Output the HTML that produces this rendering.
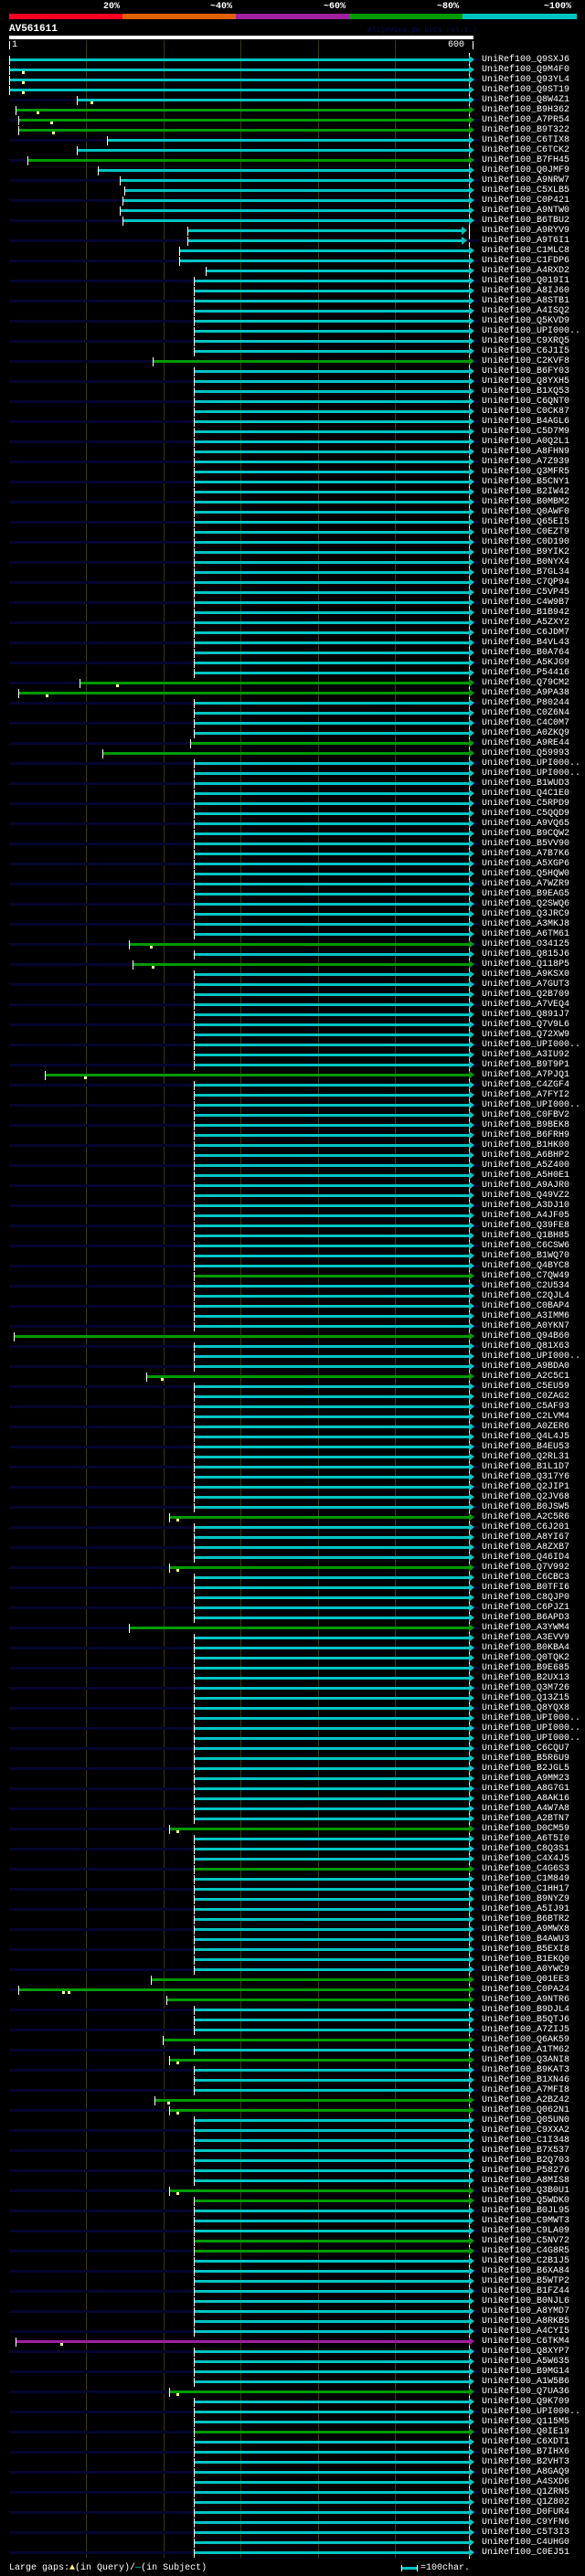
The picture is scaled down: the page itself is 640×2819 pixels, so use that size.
<!DOCTYPE html>
<html><head><meta charset="utf-8"><style>
*{margin:0;padding:0}
body{width:640px;height:2819px;background:#000;position:relative;overflow:hidden;font-family:"Liberation Mono",monospace;color:#fff}
.a{position:absolute}
.seg{position:absolute;top:15px;height:6px}
.pl{position:absolute;top:2px;font:bold 10px/11px "Liberation Mono",monospace;color:#fff}
.gl{position:absolute;top:44px;height:2755px;width:1px;background:#3a3a00}
#rows{position:absolute;top:60px;left:0;width:640px}
#rows div{position:relative;height:11px}
#rows div:nth-child(odd)::before{content:'';position:absolute;left:10px;width:514px;top:4px;height:3px;background:#05052e}
#rows i{position:absolute;left:212px;right:127px;top:4px;height:3px;background:#00c4c4}
#rows i::before{content:'';position:absolute;left:0;top:-3px;width:1px;height:10px;background:#fff}
#rows i::after{content:'';position:absolute;right:-6px;top:-3px;border-left:6px solid #00c4c4;border-top:4px solid transparent;border-bottom:5px solid transparent}
#rows i.g{background:#009a00}
#rows i.g::after{border-left-color:#009a00}
#rows i.m{background:#a020a0}
#rows i.m::after{border-left-color:#a020a0}
#rows s{position:absolute;left:527px;top:0;font:10px/11px "Liberation Mono",monospace;color:#fff;text-decoration:none;white-space:nowrap}
#rows b{position:absolute;top:7px;width:3px;height:3px;background:#ffff80}
</style></head><body>
<div class="seg" style="left:10px;width:124px;background:#ff0022"></div>
<div class="seg" style="left:134px;width:124px;background:#e06000"></div>
<div class="seg" style="left:258px;width:124px;background:#a020a0"></div>
<div class="seg" style="left:382px;width:124px;background:#009a00"></div>
<div class="seg" style="left:506px;width:125px;background:#00c4c4"></div>
<div class="pl" style="left:113px">20%</div>
<div class="pl" style="left:230px">~40%</div>
<div class="pl" style="left:354px">~60%</div>
<div class="pl" style="left:478px">~80%</div>
<div class="pl" style="left:595px">~100%</div>
<div class="a" style="left:10px;top:26px;font:bold 11px/12px 'Liberation Mono',monospace">AV561611</div>
<div class="a" style="left:402px;top:29px;font:8px/10px 'Liberation Mono',monospace;color:#0a0a50">AlignView.pm Beta rel.1.7</div>
<div class="a" style="left:10px;top:39px;width:508px;height:4px;background:#fff"></div>
<div class="a" style="left:10px;top:45px;width:1px;height:9px;background:#fff"></div>
<div class="a" style="left:13px;top:44px;font:10px/11px 'Liberation Mono',monospace">1</div>
<div class="a" style="left:490px;top:44px;font:10px/11px 'Liberation Mono',monospace">600</div>
<div class="a" style="left:517px;top:45px;width:1px;height:9px;background:#fff"></div>
<div class="gl" style="left:94px"></div><div class="gl" style="left:179px"></div><div class="gl" style="left:263px"></div><div class="gl" style="left:348px"></div><div class="gl" style="left:432px"></div>
<div class="a" style="left:513px;top:58px;width:1px;height:2742px;background:#fff"></div>
<div id="rows">
<div><i style="left:10px"></i><s>UniRef100_Q9SXJ6</s></div>
<div><i style="left:10px"></i><b style="left:24px"></b><s>UniRef100_Q9M4F0</s></div>
<div><i style="left:10px"></i><b style="left:24px"></b><s>UniRef100_Q93YL4</s></div>
<div><i style="left:10px"></i><b style="left:24px"></b><s>UniRef100_Q9ST19</s></div>
<div><i style="left:84px"></i><b style="left:99px"></b><s>UniRef100_Q8W4Z1</s></div>
<div><i class="g" style="left:17px"></i><b style="left:40px"></b><s>UniRef100_B9H362</s></div>
<div><i class="g" style="left:20px"></i><b style="left:55px"></b><s>UniRef100_A7PR54</s></div>
<div><i class="g" style="left:20px"></i><b style="left:57px"></b><s>UniRef100_B9T322</s></div>
<div><i style="left:117px"></i><s>UniRef100_C6TIX8</s></div>
<div><i style="left:84px"></i><s>UniRef100_C6TCK2</s></div>
<div><i class="g" style="left:30px"></i><s>UniRef100_B7FH45</s></div>
<div><i style="left:107px"></i><s>UniRef100_Q0JMF9</s></div>
<div><i style="left:131px"></i><s>UniRef100_A9NRW7</s></div>
<div><i style="left:136px"></i><s>UniRef100_C5XLB5</s></div>
<div><i style="left:134px"></i><s>UniRef100_C0P421</s></div>
<div><i style="left:131px"></i><s>UniRef100_A9NTW0</s></div>
<div><i style="left:134px"></i><s>UniRef100_B6TBU2</s></div>
<div><i style="left:205px;right:135px"></i><s>UniRef100_A9RYV9</s></div>
<div><i style="left:205px;right:135px"></i><s>UniRef100_A9T6I1</s></div>
<div><i style="left:196px"></i><s>UniRef100_C1MLC8</s></div>
<div><i style="left:196px"></i><s>UniRef100_C1FDP6</s></div>
<div><i style="left:225px"></i><s>UniRef100_A4RXD2</s></div>
<div><i></i><s>UniRef100_Q019I1</s></div>
<div><i></i><s>UniRef100_A8IJ60</s></div>
<div><i></i><s>UniRef100_A8STB1</s></div>
<div><i></i><s>UniRef100_A4ISQ2</s></div>
<div><i></i><s>UniRef100_Q5KVD9</s></div>
<div><i></i><s>UniRef100_UPI000..</s></div>
<div><i></i><s>UniRef100_C9XRQ5</s></div>
<div><i></i><s>UniRef100_C6J1I5</s></div>
<div><i class="g" style="left:167px"></i><s>UniRef100_C2KVF8</s></div>
<div><i></i><s>UniRef100_B6FY03</s></div>
<div><i></i><s>UniRef100_Q8YXH5</s></div>
<div><i></i><s>UniRef100_B1XQ53</s></div>
<div><i></i><s>UniRef100_C6QNT0</s></div>
<div><i></i><s>UniRef100_C0CK87</s></div>
<div><i></i><s>UniRef100_B4AGL6</s></div>
<div><i></i><s>UniRef100_C5D7M9</s></div>
<div><i></i><s>UniRef100_A0Q2L1</s></div>
<div><i></i><s>UniRef100_A8FHN9</s></div>
<div><i></i><s>UniRef100_A7Z939</s></div>
<div><i></i><s>UniRef100_Q3MFR5</s></div>
<div><i></i><s>UniRef100_B5CNY1</s></div>
<div><i></i><s>UniRef100_B2IW42</s></div>
<div><i></i><s>UniRef100_B0MBM2</s></div>
<div><i></i><s>UniRef100_Q0AWF0</s></div>
<div><i></i><s>UniRef100_Q65EI5</s></div>
<div><i></i><s>UniRef100_C0EZT9</s></div>
<div><i></i><s>UniRef100_C0D190</s></div>
<div><i></i><s>UniRef100_B9YIK2</s></div>
<div><i></i><s>UniRef100_B0NYX4</s></div>
<div><i></i><s>UniRef100_B7GL34</s></div>
<div><i></i><s>UniRef100_C7QP94</s></div>
<div><i></i><s>UniRef100_C5VP45</s></div>
<div><i></i><s>UniRef100_C4W9B7</s></div>
<div><i></i><s>UniRef100_B1B942</s></div>
<div><i></i><s>UniRef100_A5ZXY2</s></div>
<div><i></i><s>UniRef100_C6JDM7</s></div>
<div><i></i><s>UniRef100_B4VL43</s></div>
<div><i></i><s>UniRef100_B0A764</s></div>
<div><i></i><s>UniRef100_A5KJG9</s></div>
<div><i></i><s>UniRef100_P54416</s></div>
<div><i class="g" style="left:87px"></i><b style="left:127px"></b><s>UniRef100_Q79CM2</s></div>
<div><i class="g" style="left:20px"></i><b style="left:50px"></b><s>UniRef100_A9PA38</s></div>
<div><i></i><s>UniRef100_P80244</s></div>
<div><i></i><s>UniRef100_C0Z6N4</s></div>
<div><i></i><s>UniRef100_C4C0M7</s></div>
<div><i></i><s>UniRef100_A0ZKQ9</s></div>
<div><i class="g" style="left:208px"></i><s>UniRef100_A9RE44</s></div>
<div><i class="g" style="left:112px"></i><s>UniRef100_Q59993</s></div>
<div><i></i><s>UniRef100_UPI000..</s></div>
<div><i></i><s>UniRef100_UPI000..</s></div>
<div><i></i><s>UniRef100_B1WUD3</s></div>
<div><i></i><s>UniRef100_Q4C1E0</s></div>
<div><i></i><s>UniRef100_C5RPD9</s></div>
<div><i></i><s>UniRef100_C5QQD9</s></div>
<div><i></i><s>UniRef100_A9VQ65</s></div>
<div><i></i><s>UniRef100_B9CQW2</s></div>
<div><i></i><s>UniRef100_B5VV90</s></div>
<div><i></i><s>UniRef100_A7B7K6</s></div>
<div><i></i><s>UniRef100_A5XGP6</s></div>
<div><i></i><s>UniRef100_Q5HQW0</s></div>
<div><i></i><s>UniRef100_A7WZR9</s></div>
<div><i></i><s>UniRef100_B9EAG5</s></div>
<div><i></i><s>UniRef100_Q2SWQ6</s></div>
<div><i></i><s>UniRef100_Q3JRC9</s></div>
<div><i></i><s>UniRef100_A3MKJ8</s></div>
<div><i></i><s>UniRef100_A6TM61</s></div>
<div><i class="g" style="left:141px"></i><b style="left:164px"></b><s>UniRef100_O34125</s></div>
<div><i></i><s>UniRef100_Q815J6</s></div>
<div><i class="g" style="left:145px"></i><b style="left:166px"></b><s>UniRef100_Q118P5</s></div>
<div><i></i><s>UniRef100_A9KSX0</s></div>
<div><i></i><s>UniRef100_A7GUT3</s></div>
<div><i></i><s>UniRef100_Q2B709</s></div>
<div><i></i><s>UniRef100_A7VEQ4</s></div>
<div><i></i><s>UniRef100_Q891J7</s></div>
<div><i></i><s>UniRef100_Q7V9L6</s></div>
<div><i></i><s>UniRef100_Q72XW9</s></div>
<div><i></i><s>UniRef100_UPI000..</s></div>
<div><i></i><s>UniRef100_A3IU92</s></div>
<div><i></i><s>UniRef100_B9T9P1</s></div>
<div><i class="g" style="left:49px"></i><b style="left:92px"></b><s>UniRef100_A7PJQ1</s></div>
<div><i></i><s>UniRef100_C4ZGF4</s></div>
<div><i></i><s>UniRef100_A7FYI2</s></div>
<div><i></i><s>UniRef100_UPI000..</s></div>
<div><i></i><s>UniRef100_C0FBV2</s></div>
<div><i></i><s>UniRef100_B9BEK8</s></div>
<div><i></i><s>UniRef100_B6FRH9</s></div>
<div><i></i><s>UniRef100_B1HK00</s></div>
<div><i></i><s>UniRef100_A6BHP2</s></div>
<div><i></i><s>UniRef100_A5Z400</s></div>
<div><i></i><s>UniRef100_A5H0E1</s></div>
<div><i></i><s>UniRef100_A9AJR0</s></div>
<div><i></i><s>UniRef100_Q49VZ2</s></div>
<div><i></i><s>UniRef100_A3DJ10</s></div>
<div><i></i><s>UniRef100_A4JF05</s></div>
<div><i></i><s>UniRef100_Q39FE8</s></div>
<div><i></i><s>UniRef100_Q1BH85</s></div>
<div><i></i><s>UniRef100_C6CSW6</s></div>
<div><i></i><s>UniRef100_B1WQ70</s></div>
<div><i></i><s>UniRef100_Q4BYC8</s></div>
<div><i class="g"></i><s>UniRef100_C7QW49</s></div>
<div><i></i><s>UniRef100_C2U534</s></div>
<div><i></i><s>UniRef100_C2QJL4</s></div>
<div><i></i><s>UniRef100_C0BAP4</s></div>
<div><i></i><s>UniRef100_A3IMM6</s></div>
<div><i></i><s>UniRef100_A0YKN7</s></div>
<div><i class="g" style="left:15px"></i><s>UniRef100_Q94B60</s></div>
<div><i></i><s>UniRef100_Q81X63</s></div>
<div><i></i><s>UniRef100_UPI000..</s></div>
<div><i></i><s>UniRef100_A9BDA0</s></div>
<div><i class="g" style="left:160px"></i><b style="left:176px"></b><s>UniRef100_A2C5C1</s></div>
<div><i></i><s>UniRef100_C5EU59</s></div>
<div><i></i><s>UniRef100_C0ZAG2</s></div>
<div><i></i><s>UniRef100_C5AF93</s></div>
<div><i></i><s>UniRef100_C2LVM4</s></div>
<div><i></i><s>UniRef100_A0ZER6</s></div>
<div><i></i><s>UniRef100_Q4L4J5</s></div>
<div><i></i><s>UniRef100_B4EU53</s></div>
<div><i></i><s>UniRef100_Q2RL31</s></div>
<div><i></i><s>UniRef100_B1L1D7</s></div>
<div><i></i><s>UniRef100_Q317Y6</s></div>
<div><i></i><s>UniRef100_Q2JIP1</s></div>
<div><i></i><s>UniRef100_Q2JV68</s></div>
<div><i></i><s>UniRef100_B0JSW5</s></div>
<div><i class="g" style="left:185px"></i><b style="left:193px"></b><s>UniRef100_A2C5R6</s></div>
<div><i></i><s>UniRef100_C6J201</s></div>
<div><i></i><s>UniRef100_A8YI67</s></div>
<div><i></i><s>UniRef100_A8ZXB7</s></div>
<div><i></i><s>UniRef100_Q46ID4</s></div>
<div><i class="g" style="left:185px"></i><b style="left:193px"></b><s>UniRef100_Q7V992</s></div>
<div><i></i><s>UniRef100_C6CBC3</s></div>
<div><i></i><s>UniRef100_B0TFI6</s></div>
<div><i></i><s>UniRef100_C8QJP0</s></div>
<div><i></i><s>UniRef100_C6PJZ1</s></div>
<div><i></i><s>UniRef100_B6APD3</s></div>
<div><i class="g" style="left:141px"></i><s>UniRef100_A3YWM4</s></div>
<div><i></i><s>UniRef100_A3EVV9</s></div>
<div><i></i><s>UniRef100_B0KBA4</s></div>
<div><i></i><s>UniRef100_Q0TQK2</s></div>
<div><i></i><s>UniRef100_B9E685</s></div>
<div><i></i><s>UniRef100_B2UX13</s></div>
<div><i></i><s>UniRef100_Q3M726</s></div>
<div><i></i><s>UniRef100_Q13Z15</s></div>
<div><i></i><s>UniRef100_Q8YQX8</s></div>
<div><i></i><s>UniRef100_UPI000..</s></div>
<div><i></i><s>UniRef100_UPI000..</s></div>
<div><i></i><s>UniRef100_UPI000..</s></div>
<div><i></i><s>UniRef100_C6CQU7</s></div>
<div><i></i><s>UniRef100_B5R6U9</s></div>
<div><i></i><s>UniRef100_B2JGL5</s></div>
<div><i></i><s>UniRef100_A9MM23</s></div>
<div><i></i><s>UniRef100_A8G7G1</s></div>
<div><i></i><s>UniRef100_A8AK16</s></div>
<div><i></i><s>UniRef100_A4W7A8</s></div>
<div><i></i><s>UniRef100_A2BTN7</s></div>
<div><i class="g" style="left:185px"></i><b style="left:193px"></b><s>UniRef100_D0CM59</s></div>
<div><i></i><s>UniRef100_A6T5I0</s></div>
<div><i></i><s>UniRef100_C8Q3S1</s></div>
<div><i></i><s>UniRef100_C4X4J5</s></div>
<div><i class="g"></i><s>UniRef100_C4G6S3</s></div>
<div><i></i><s>UniRef100_C1M849</s></div>
<div><i></i><s>UniRef100_C1HH17</s></div>
<div><i></i><s>UniRef100_B9NYZ9</s></div>
<div><i></i><s>UniRef100_A5IJ91</s></div>
<div><i></i><s>UniRef100_B6BTR2</s></div>
<div><i></i><s>UniRef100_A9MWX8</s></div>
<div><i></i><s>UniRef100_B4AWU3</s></div>
<div><i></i><s>UniRef100_B5EXI8</s></div>
<div><i></i><s>UniRef100_B1EKQ0</s></div>
<div><i></i><s>UniRef100_A0YWC9</s></div>
<div><i class="g" style="left:165px"></i><s>UniRef100_Q01EE3</s></div>
<div><i class="g" style="left:20px"></i><b style="left:68px"></b><b style="left:74px"></b><s>UniRef100_C0PA24</s></div>
<div><i class="g" style="left:182px"></i><s>UniRef100_A9NTR6</s></div>
<div><i></i><s>UniRef100_B9DJL4</s></div>
<div><i></i><s>UniRef100_B5QTJ6</s></div>
<div><i></i><s>UniRef100_A7ZIJ5</s></div>
<div><i class="g" style="left:178px"></i><s>UniRef100_Q6AK59</s></div>
<div><i></i><s>UniRef100_A1TM62</s></div>
<div><i class="g" style="left:185px"></i><b style="left:193px"></b><s>UniRef100_Q3ANI8</s></div>
<div><i></i><s>UniRef100_B9KAT3</s></div>
<div><i></i><s>UniRef100_B1XN46</s></div>
<div><i></i><s>UniRef100_A7MFI8</s></div>
<div><i class="g" style="left:169px"></i><b style="left:183px"></b><s>UniRef100_A2BZ42</s></div>
<div><i class="g" style="left:185px"></i><b style="left:193px"></b><s>UniRef100_Q062N1</s></div>
<div><i></i><s>UniRef100_Q05UN0</s></div>
<div><i></i><s>UniRef100_C9XXA2</s></div>
<div><i></i><s>UniRef100_C1I348</s></div>
<div><i></i><s>UniRef100_B7X537</s></div>
<div><i></i><s>UniRef100_B2Q703</s></div>
<div><i></i><s>UniRef100_P58276</s></div>
<div><i></i><s>UniRef100_A8MIS8</s></div>
<div><i class="g" style="left:185px"></i><b style="left:193px"></b><s>UniRef100_Q3B0U1</s></div>
<div><i class="g"></i><s>UniRef100_Q5WDK0</s></div>
<div><i></i><s>UniRef100_B0JL95</s></div>
<div><i></i><s>UniRef100_C9MWT3</s></div>
<div><i></i><s>UniRef100_C9LA09</s></div>
<div><i class="g"></i><s>UniRef100_C5NV72</s></div>
<div><i class="g"></i><s>UniRef100_C4G8R5</s></div>
<div><i></i><s>UniRef100_C2B1J5</s></div>
<div><i></i><s>UniRef100_B6XA84</s></div>
<div><i></i><s>UniRef100_B5WTP2</s></div>
<div><i></i><s>UniRef100_B1FZ44</s></div>
<div><i></i><s>UniRef100_B0NJL6</s></div>
<div><i></i><s>UniRef100_A8YMD7</s></div>
<div><i></i><s>UniRef100_A8RKB5</s></div>
<div><i></i><s>UniRef100_A4CYI5</s></div>
<div><i class="m" style="left:17px"></i><b style="left:66px"></b><s>UniRef100_C6TKM4</s></div>
<div><i></i><s>UniRef100_Q8XYP7</s></div>
<div><i></i><s>UniRef100_A5W635</s></div>
<div><i></i><s>UniRef100_B9MG14</s></div>
<div><i></i><s>UniRef100_A1W5B6</s></div>
<div><i class="g" style="left:185px"></i><b style="left:193px"></b><s>UniRef100_Q7UA36</s></div>
<div><i></i><s>UniRef100_Q9K709</s></div>
<div><i></i><s>UniRef100_UPI000..</s></div>
<div><i></i><s>UniRef100_Q115M5</s></div>
<div><i class="g"></i><s>UniRef100_Q0IE19</s></div>
<div><i></i><s>UniRef100_C6XDT1</s></div>
<div><i></i><s>UniRef100_B7IHX6</s></div>
<div><i></i><s>UniRef100_B2VHT3</s></div>
<div><i></i><s>UniRef100_A8GAQ9</s></div>
<div><i></i><s>UniRef100_A4SXD6</s></div>
<div><i></i><s>UniRef100_Q1ZRN5</s></div>
<div><i></i><s>UniRef100_Q1Z802</s></div>
<div><i></i><s>UniRef100_D0FUR4</s></div>
<div><i></i><s>UniRef100_C9YFN6</s></div>
<div><i></i><s>UniRef100_C5T3I3</s></div>
<div><i></i><s>UniRef100_C4UHG0</s></div>
<div><i></i><s>UniRef100_C0EJ51</s></div>
</div>
<div class="a" style="left:10px;top:2805px;font:10px/11px 'Liberation Mono',monospace;white-space:nowrap">Large gaps:<span style="color:#ffff80">&#9650;</span>(in Query)/<span style="color:#00c4c4">&#8212;</span>(in Subject)</div>
<div class="a" style="left:439px;top:2807px;width:1px;height:7px;background:#fff"></div>
<div class="a" style="left:440px;top:2809px;width:16px;height:3px;background:#00c4c4"></div>
<div class="a" style="left:456px;top:2807px;width:1px;height:7px;background:#fff"></div>
<div class="a" style="left:460px;top:2805px;font:10px/11px 'Liberation Mono',monospace">=100char.</div>
</body></html>
